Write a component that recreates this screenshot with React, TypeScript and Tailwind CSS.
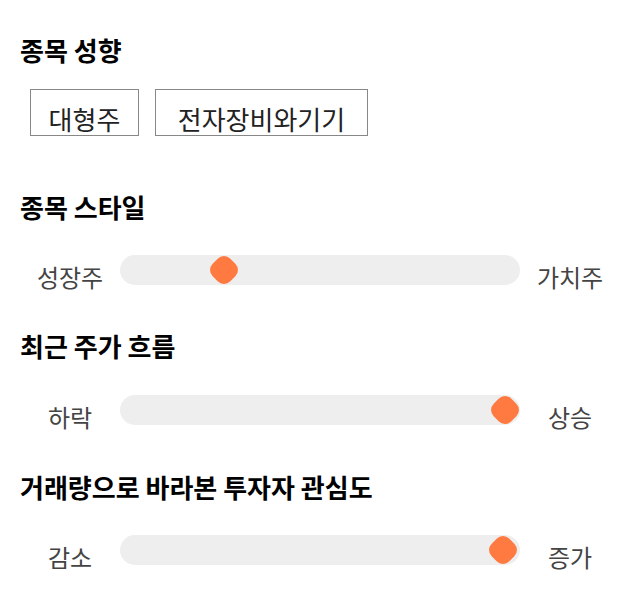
import React from 'react';

const font = { fontFamily: '"Noto Sans CJK KR", "Noto Sans", sans-serif' };

function Slider({ left, right, value }: { left: string; right: string; value: number }) {
  return (
    <div className="flex items-center h-[30px]">
      <span className="w-[100px] pt-[14px] text-center text-[24px] leading-[32px] text-[#444]">{left}</span>
      <div className="relative w-[400px] h-[30px] rounded-full bg-[#eeeeee]">
        <div
          className="absolute top-1/2 w-[25px] h-[25px] -translate-x-1/2 -translate-y-1/2 rotate-45 rounded-[9px] bg-[#ff7a40]"
          style={{ left: `${15 + value * 370}px` }}
        />
      </div>
      <span className="w-[100px] pt-[14px] text-center text-[24px] leading-[32px] text-[#444]">{right}</span>
    </div>
  );
}

export default function App() {
  return (
    <div className="w-[640px] h-[606px] bg-white px-5 pt-[34px]" style={font}>
      <h2 className="text-[26px] leading-[32px] font-bold text-black">종목 성향</h2>
      <div className="flex gap-4 ml-[10px] mt-[23px]">
        <span className="w-[109px] h-[47px] pt-[12px] flex items-center justify-center border border-[#888] text-[26px] text-[#222]">대형주</span>
        <span className="w-[213px] h-[47px] pt-[12px] flex items-center justify-center border border-[#888] text-[26px] text-[#222]">전자장비와기기</span>
      </div>

      <h2 className="mt-[55px] text-[26px] leading-[32px] font-bold text-black">종목 스타일</h2>
      <div className="mt-[32px]">
        <Slider left="성장주" right="가치주" value={0.24} />
      </div>

      <h2 className="mt-[45px] text-[26px] leading-[32px] font-bold text-black">최근 주가 흐름</h2>
      <div className="mt-[33px]">
        <Slider left="하락" right="상승" value={1} />
      </div>

      <h2 className="mt-[46px] text-[26px] leading-[32px] font-bold text-black">거래량으로 바라본 투자자 관심도</h2>
      <div className="mt-[32px]">
        <Slider left="감소" right="증가" value={0.995} />
      </div>
    </div>
  );
}
